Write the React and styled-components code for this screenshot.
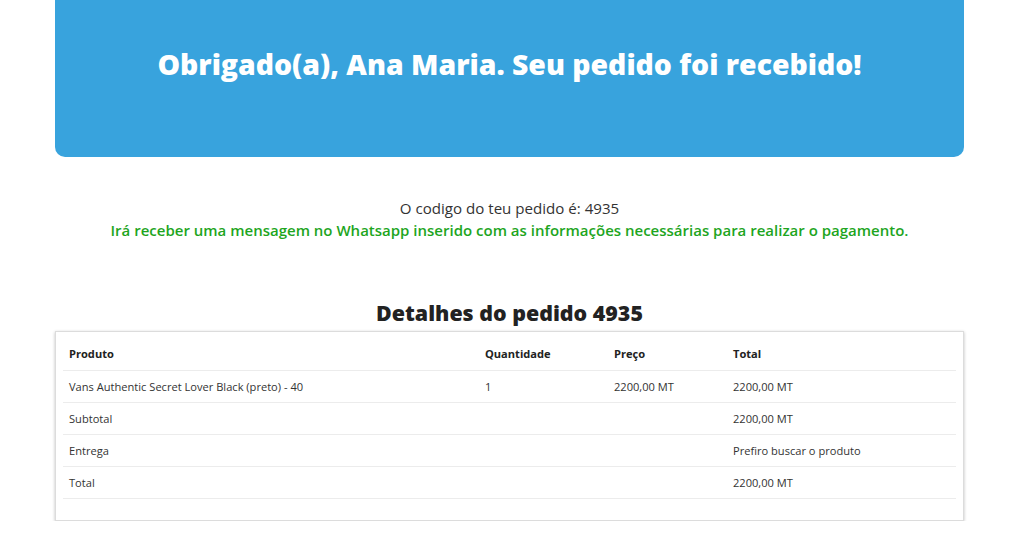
import React from "react";
import styled, { createGlobalStyle } from "styled-components";

const Global = createGlobalStyle`
  * { box-sizing: border-box; }
  html, body { margin: 0; padding: 0; background: #ffffff; }
  body { font-family: "Open Sans", "Noto Sans", sans-serif; color: #333; }
`;

const Page = styled.div`
  width: 1019px;
  display: flex;
  flex-direction: column;
  align-items: center;
`;

const Banner = styled.header`
  width: 909px;
  height: 157px;
  background: #38a3dd;
  border-radius: 0 0 10px 10px;
  display: flex;
  justify-content: center;
  padding-top: 42px;
`;

const Title = styled.h1`
  margin: 0;
  font-family: "Open Sans", sans-serif;
  font-weight: 800;
  font-size: 28.4px;
  line-height: 44px;
  color: #ffffff;
`;

const Info = styled.section`
  margin-top: 40px;
  display: flex;
  flex-direction: column;
  align-items: center;
`;

const Code = styled.p`
  margin: 0;
  font-size: 15.1px;
  line-height: 22px;
  color: #333333;
`;

const Notice = styled.p`
  margin: 0;
  font-size: 15px;
  line-height: 22px;
  font-weight: 600;
  color: #1ea51e;
`;

const DetailsTitle = styled.h2`
  margin: 58px 0 0;
  font-family: "Open Sans", sans-serif;
  font-weight: 800;
  font-size: 21.4px;
  line-height: 28px;
  color: #222222;
`;

const Card = styled.div`
  width: 909px;
  margin-top: 4px;
  background: #fff;
  border: 1px solid #dcdcdc;
  box-shadow: 0 1px 3px rgba(0, 0, 0, 0.25);
  padding: 6px 7px 21px;
`;

const Table = styled.table`
  width: 100%;
  border-collapse: collapse;
  font-size: 11.1px;
  color: #333;
`;

const Th = styled.th`
  text-align: left;
  font-weight: 700;
  color: #222;
  height: 32px;
  padding: 0 0 0 6px;
  border-bottom: 1px solid #ececec;
  width: ${(p) => p.$w || "auto"};
`;

const Td = styled.td`
  height: 32px;
  padding: 0 0 0 6px;
  border-bottom: 1px solid #ececec;
`;

const rows = [
  ["Vans Authentic Secret Lover Black (preto) - 40", "1", "2200,00 MT", "2200,00 MT"],
  ["Subtotal", "", "", "2200,00 MT"],
  ["Entrega", "", "", "Prefiro buscar o produto"],
  ["Total", "", "", "2200,00 MT"],
];

export default function App() {
  return (
    <>
      <Global />
      <Page>
        <Banner>
          <Title>Obrigado(a), Ana Maria. Seu pedido foi recebido!</Title>
        </Banner>
        <Info>
          <Code>O codigo do teu pedido é: 4935</Code>
          <Notice>
            Irá receber uma mensagem no Whatsapp inserido com as informações necessárias para realizar o pagamento.
          </Notice>
        </Info>
        <DetailsTitle>Detalhes do pedido 4935</DetailsTitle>
        <Card>
          <Table>
            <thead>
              <tr>
                <Th $w="416px">Produto</Th>
                <Th $w="129px">Quantidade</Th>
                <Th $w="119px">Preço</Th>
                <Th>Total</Th>
              </tr>
            </thead>
            <tbody>
              {rows.map((r, i) => (
                <tr key={i}>
                  {r.map((c, j) => (
                    <Td key={j}>{c}</Td>
                  ))}
                </tr>
              ))}
            </tbody>
          </Table>
        </Card>
      </Page>
    </>
  );
}
